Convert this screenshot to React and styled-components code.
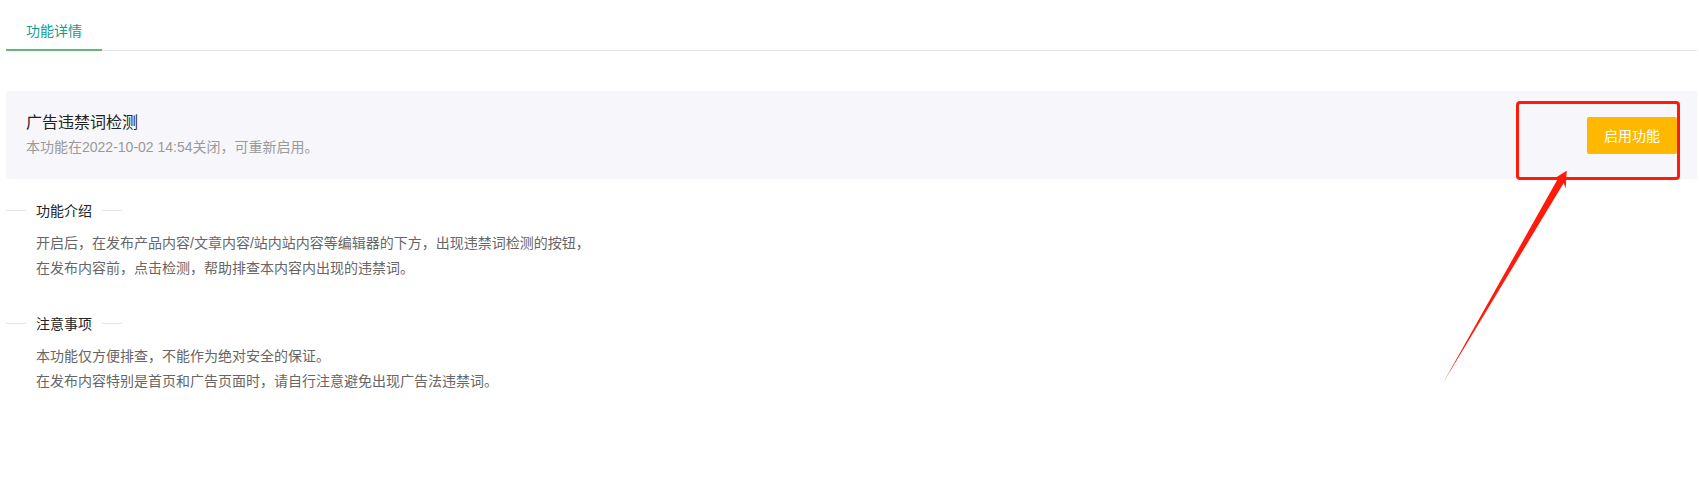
import React from "react";
import styled, { createGlobalStyle } from "styled-components";

const Global = createGlobalStyle`
  html, body { margin: 0; padding: 0; background: #fff; }
  body {
    font-family: "Liberation Sans", "Microsoft YaHei", "Noto Sans CJK SC", sans-serif;
    -webkit-font-smoothing: antialiased;
  }
`;

const Page = styled.div`
  position: relative;
  width: 1699px;
  height: 481px;
  padding: 10px 2px 0 6px;
  box-sizing: border-box;
`;

const TabBar = styled.div`
  display: flex;
  height: 40px;
  border-bottom: 1px solid #e6e6e6;
`;

const Tab = styled.div`
  height: 41px;
  box-sizing: border-box;
  padding: 0 20px;
  margin-bottom: -1px;
  display: flex;
  align-items: center;
  font-size: 14px;
  color: ${(p) => (p.$active ? "#129e8c" : "#333")};
  border-bottom: 2px solid ${(p) => (p.$active ? "#5fb878" : "transparent")};
`;

const Card = styled.div`
  margin-top: 40px;
  height: 88px;
  background: #f7f7fb;
  padding: 0 20px;
  display: flex;
  align-items: center;
  justify-content: space-between;
`;

const CardText = styled.div`
  display: flex;
  flex-direction: column;
`;

const Title = styled.div`
  font-size: 16px;
  line-height: 22px;
  color: #222;
`;

const Sub = styled.div`
  margin-top: 2px;
  font-size: 14px;
  line-height: 22px;
  color: #999;
`;

const Button = styled.button`
  width: 90px;
  height: 37px;
  border: none;
  border-radius: 2px;
  background: #ffb800;
  color: #fff;
  font-family: inherit;
  font-size: 14px;
  padding: 0;
  cursor: pointer;
`;

const Section = styled.section`
  margin-top: ${(p) => p.$gap}px;
`;

const Legend = styled.div`
  display: flex;
  align-items: center;
  gap: 10px;
  height: 20px;
  font-size: 14px;
  color: #222;
  &::before, &::after {
    content: "";
    width: 20px;
    height: 1px;
    background: #e6e6e6;
  }
`;

const Body = styled.div`
  margin-top: 11px;
  padding-left: 30px;
  font-size: 14px;
  line-height: 24.5px;
  color: #666;
`;

const Overlay = styled.svg`
  position: absolute;
  left: 0;
  top: 0;
  pointer-events: none;
`;

export default function App() {
  return (
    <>
      <Global />
      <Page>
        <TabBar>
          <Tab $active>功能详情</Tab>
        </TabBar>
        <Card>
          <CardText>
            <Title>广告违禁词检测</Title>
            <Sub>本功能在2022-10-02 14:54关闭，可重新启用。</Sub>
          </CardText>
          <Button>启用功能</Button>
        </Card>
        <Section $gap={21}>
          <Legend>功能介绍</Legend>
          <Body>
            开启后，在发布产品内容/文章内容/站内站内容等编辑器的下方，出现违禁词检测的按钮，
            <br />
            在发布内容前，点击检测，帮助排查本内容内出现的违禁词。
          </Body>
        </Section>
        <Section $gap={33}>
          <Legend>注意事项</Legend>
          <Body>
            本功能仅方便排查，不能作为绝对安全的保证。
            <br />
            在发布内容特别是首页和广告页面时，请自行注意避免出现广告法违禁词。
          </Body>
        </Section>
        <Overlay width="1699" height="481" viewBox="0 0 1699 481">
          <rect x="1517.5" y="102.5" width="161" height="76" rx="2.5" fill="none" stroke="#ff1a0a" strokeWidth="3" />
          <polygon
            points="1443,383 1557.6,179.3 1551.5,180.2 1566.7,170.7 1565.7,188.6 1563.7,182.9"
            fill="#ff1a0a"
          />
        </Overlay>
      </Page>
    </>
  );
}
